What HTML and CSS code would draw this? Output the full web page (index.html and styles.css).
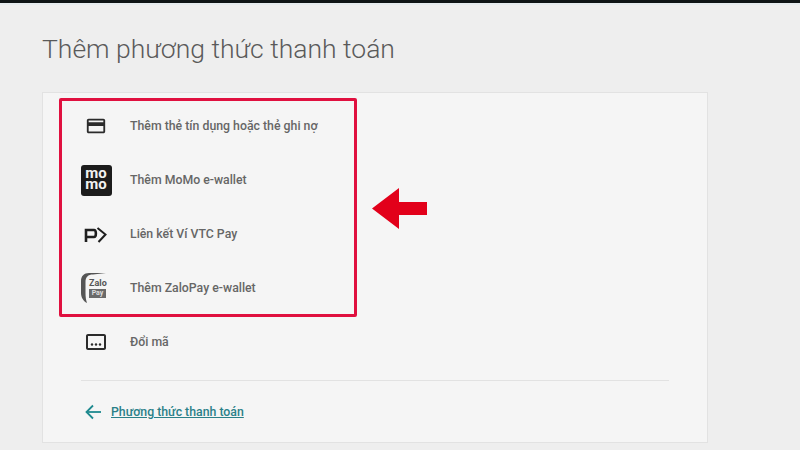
FILE: index.html
```html
<!DOCTYPE html>
<html lang="vi">
<head>
  <meta charset="UTF-8">
  <title>Thêm phương thức thanh toán</title>
  <link rel="stylesheet" href="styles.css">
</head>
<body>
  <div class="top-bar"></div>
  <main class="page">
    <h1 class="title">Thêm phương thức thanh toán</h1>

    <section class="card">
      <div class="highlight">
        <div class="row">
          <span class="row-icon">
            <svg width="22" height="22" viewBox="0 0 24 24"><path fill="#2b2b2b" d="M20 4H4c-1.100 0-2 .9-2 2v12c0 1.100.9 2 2 2h16c1.100 0 2-.9 2-2V6c0-1.100-.9-2-2-2zm0 14H4v-6h16v6zm0-10H4V6h16v2z"/></svg>
          </span>
          <span class="row-label">Thêm thẻ tín dụng hoặc thẻ ghi nợ</span>
        </div>
        <div class="row">
          <span class="row-icon">
            <span class="momo">mo<br>mo</span>
          </span>
          <span class="row-label">Thêm MoMo e-wallet</span>
        </div>
        <div class="row">
          <span class="row-icon">
            <svg width="24" height="24" viewBox="0 0 24 24" fill="none" stroke="#1f1f1f" stroke-width="2.600"><path d="M2 20V8h8c2.500 0 2.500 7 0 7H2"/><path d="M13.500 6l8 6.500-7 7.500" stroke-width="2"/></svg>
          </span>
          <span class="row-label">Liên kết Ví VTC Pay</span>
        </div>
        <div class="row">
          <span class="row-icon">
            <span class="zalo">
              <svg class="zalo-arc" width="30" height="32" viewBox="0 0 30 32"><path fill="#555" d="M26 1H9C4 1 1 4 1 9v12c0 4 2 8 6 10-1-3-1.500-6-1.500-10V10C5.500 5 8 2.500 13 2.500z"/></svg>
              <span class="zalo-word">Zalo</span>
              <span class="zalo-pay">Pay</span>
            </span>
          </span>
          <span class="row-label">Thêm ZaloPay e-wallet</span>
        </div>
      </div>

      <div class="row row-plain">
        <span class="row-icon">
          <svg width="24" height="24" viewBox="0 0 24 24"><path fill="#2b2b2b" d="M20 4H4c-1.100 0-2 .9-2 2v12c0 1.100.9 2 2 2h16c1.100 0 2-.9 2-2V6c0-1.100-.9-2-2-2zm0 14H4V6h16v12z"/><circle fill="#2b2b2b" cx="8" cy="14.500" r="1.200"/><circle fill="#2b2b2b" cx="12" cy="14.500" r="1.200"/><circle fill="#2b2b2b" cx="16" cy="14.500" r="1.200"/></svg>
        </span>
        <span class="row-label">Đổi mã</span>
      </div>

      <div class="divider"></div>

      <div class="back">
        <svg width="16" height="16" viewBox="0 0 16 16" fill="none" stroke="#1f8a8f" stroke-width="1.800"><path d="M16 8H1.500"/><path d="M8 1.500L1.500 8 8 14.500"/></svg>
        <a class="back-link" href="#">Phương thức thanh toán</a>
      </div>
    </section>

    <svg class="red-arrow" width="55" height="41" viewBox="0 0 55 41"><path fill="#e2001a" d="M0 20.500L27 0v14h28v13H27v14z"/></svg>
  </main>
</body>
</html>
```

FILE: styles.css
```css
* {
  box-sizing: border-box;
}
html, body {
  margin: 0;
  height: 100%;
  overflow: hidden;
}
body {
  font-family: Roboto, "Liberation Sans", sans-serif;
  background-color: #eeeeee;
  color: #5f5f5f;
}
.top-bar {
  height: 5px;
  background-color: #0f1416;
  border-bottom: 2px solid #e6ebee;
}
.page {
  position: relative;
  padding: 0 92px 0 42px;
}
.title {
  margin: 0;
  padding-top: 27px;
  height: 87px;
  font-size: 26.500px;
  line-height: 34px;
  font-weight: 300;
  color: #5a5a5a;
}
.card {
  height: 351px;
  padding: 5px 38px 0 16px;
  background-color: #f5f5f5;
  border: 1px solid #e2e2e2;
}
.highlight {
  width: 298px;
  height: 219px;
  border: 3px solid #e0103f;
  border-radius: 2px;
}
.row {
  display: flex;
  align-items: center;
  height: 54px;
}
.highlight .row:first-child {
  margin-top: -2px;
}
.row-plain {
  margin-left: 3px;
  height: 50px;
}
.row-icon {
  display: flex;
  justify-content: center;
  align-items: center;
  width: 32px;
  margin-left: 18px;
  margin-right: 18px;
}
.row-label {
  font-size: 12.300px;
  font-weight: 500;
  color: #666666;
}
.momo {
  display: block;
  width: 31px;
  height: 31px;
  padding-top: 3px;
  background-color: #1c1c1c;
  border-radius: 3px;
  color: #f2f2f2;
  font-size: 15px;
  font-weight: 700;
  line-height: 11px;
  text-align: center;
}
.zalo {
  position: relative;
  display: block;
  width: 30px;
  height: 32px;
  margin-left: -2px;
}
.zalo-arc {
  position: absolute;
  left: 0;
  top: 0;
}
.zalo-word {
  position: absolute;
  left: 9px;
  top: 6px;
  font-size: 9px;
  line-height: 10px;
  font-weight: 700;
  color: #555555;
}
.zalo-pay {
  position: absolute;
  left: 9px;
  top: 17px;
  width: 17px;
  background-color: #6a6a6a;
  color: #dddddd;
  font-size: 7px;
  line-height: 9px;
  font-weight: 700;
  text-align: center;
}
.divider {
  height: 1px;
  margin: 13px 0 0 22px;
  background-color: #e2e2e2;
}
.back {
  display: flex;
  align-items: center;
  gap: 10px;
  margin: 23px 0 0 26px;
}
.back-link {
  font-size: 12.300px;
  font-weight: 500;
  color: #2a8088;
  text-decoration: underline;
}
.red-arrow {
  position: absolute;
  left: 372px;
  top: 183px;
}
```
